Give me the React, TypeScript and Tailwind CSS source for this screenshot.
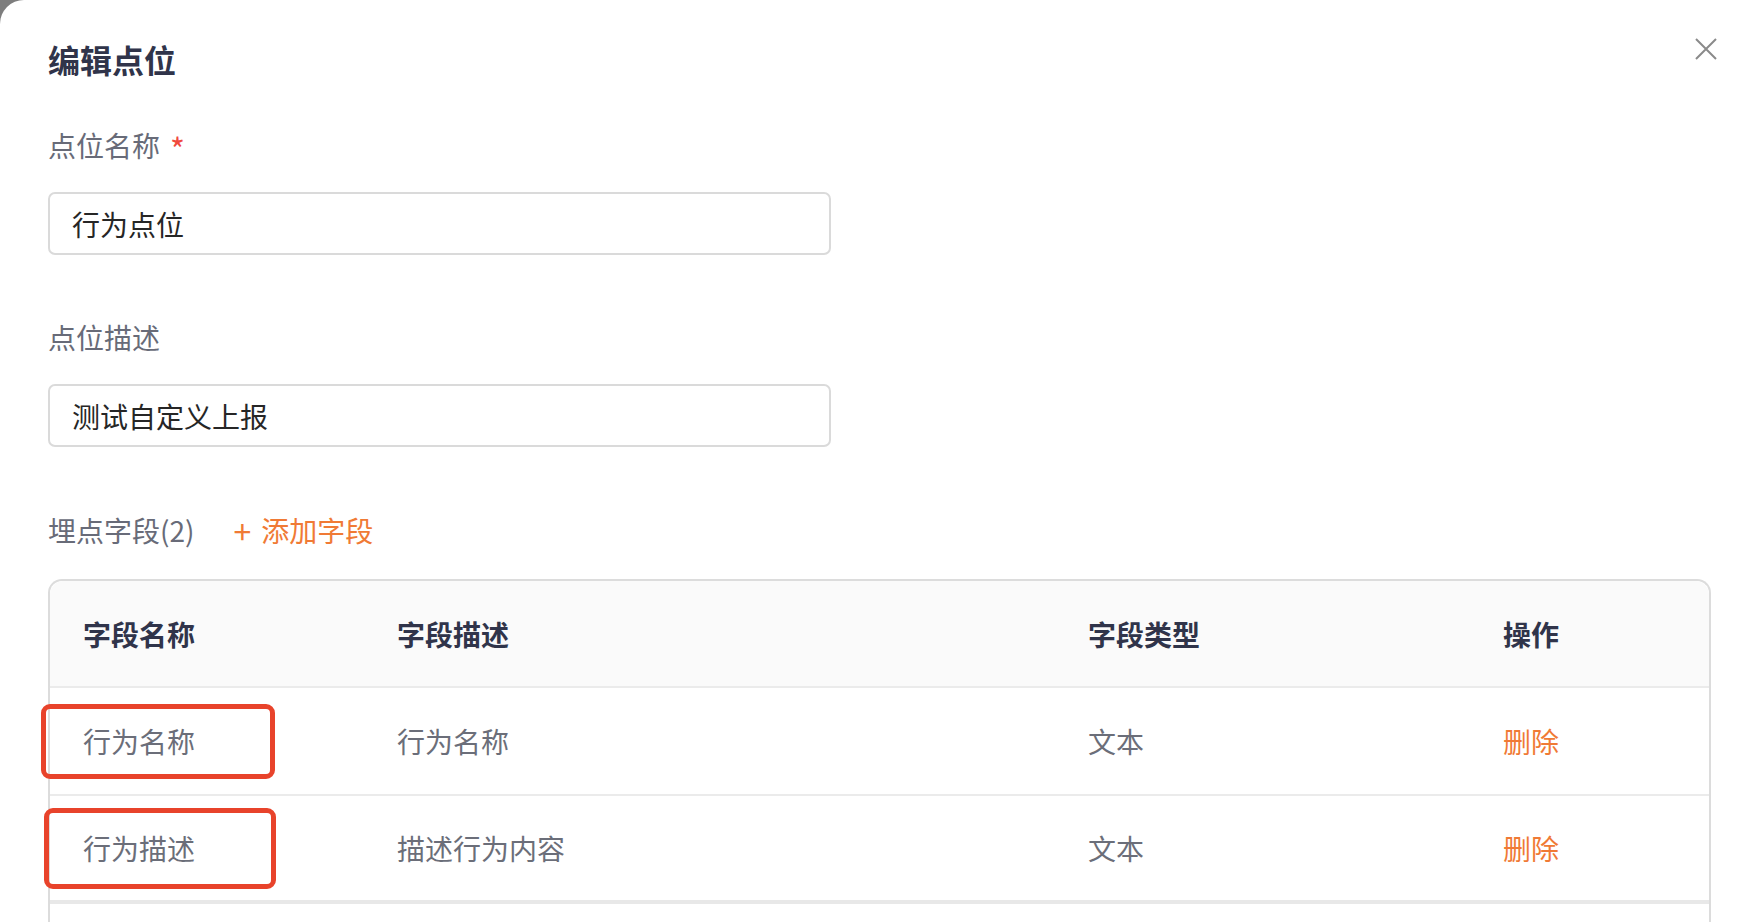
import React from "react";

const rows = [
  { name: "行为名称", desc: "行为名称", type: "文本", box: "top-[16px] left-[-9px] w-[234px] h-[75px]" },
  { name: "行为描述", desc: "描述行为内容", type: "文本", box: "top-[12px] left-[-6px] w-[232px] h-[81px]" },
];

const font = { fontFamily: '"PingFang SC", "Noto Sans CJK SC", "Noto Sans", sans-serif' };

export default function App() {
  return (
    <div className="w-[1752px] h-[922px] bg-[#7d7d7d] overflow-hidden" style={font}>
      <div className="relative h-full bg-white rounded-tl-[24px] px-[48px] pt-[40px]">
        <button className="absolute right-[34px] top-[37px] w-[24px] h-[24px] text-[#8a8a8a]">
          <svg viewBox="0 0 24 24" className="w-full h-full" fill="none" stroke="currentColor" strokeWidth="2">
            <path d="M2 2L22 22M22 2L2 22" />
          </svg>
        </button>

        <h2 className="text-[32px] leading-[38px] font-bold text-[#30344a]">编辑点位</h2>

        <div className="mt-[47px] h-[40px] flex items-center text-[28px] leading-[40px] text-[#686b78]">
          点位名称<span className="relative top-[3px] ml-[10px] text-[32px] leading-[40px] text-[#f04a3e]">*</span>
        </div>
        <div className="mt-[27px] w-[783px] h-[63px] rounded-[7px] border-2 border-[#dadada] flex items-center px-[22px] text-[28px] text-[#262626]">
          行为点位
        </div>

        <div className="mt-[62px] h-[40px] text-[28px] leading-[40px] text-[#686b78]">点位描述</div>
        <div className="mt-[27px] w-[783px] h-[63px] rounded-[7px] border-2 border-[#dadada] flex items-center px-[22px] text-[28px] text-[#262626]">
          测试自定义上报
        </div>

        <div className="mt-[63px] h-[40px] flex items-center text-[28px] leading-[40px]">
          <span className="text-[#686b78]">埋点字段(2)</span>
          <span className="ml-[39px] text-[#f07a35] flex items-center">
            <span className="text-[32px] leading-[40px] mr-[10px]">+</span>添加字段
          </span>
        </div>

        <div className="mt-[29px] w-[1663px] rounded-t-[14px] border-2 border-b-0 border-[#dcdcdc] text-[28px]">
          <div className="grid grid-cols-[347px_691px_415px_1fr] h-[107px] items-center bg-[#fafafa] rounded-t-[14px] border-b-2 border-[#ebebeb] font-bold text-[#30344a]">
            <div className="pl-[33px]">字段名称</div>
            <div>字段描述</div>
            <div>字段类型</div>
            <div>操作</div>
          </div>
          {rows.map((r, i) => (
            <div
              key={i}
              className={`relative grid grid-cols-[347px_691px_415px_1fr] h-[108px] items-center text-[#6b6e79] ${
                i === rows.length - 1 ? "border-b-[4px] border-[#e8e8e8]" : "border-b-2 border-[#ebebeb]"
              }`}
            >
              <div className="pl-[33px]">{r.name}</div>
              <div>{r.desc}</div>
              <div>{r.type}</div>
              <div className="text-[#f07a35]">删除</div>
              <div className={`absolute ${r.box} rounded-[9px] border-[5px] border-[#e8432b]`} />
            </div>
          ))}
          <div className="h-[40px]" />
        </div>
      </div>
    </div>
  );
}
